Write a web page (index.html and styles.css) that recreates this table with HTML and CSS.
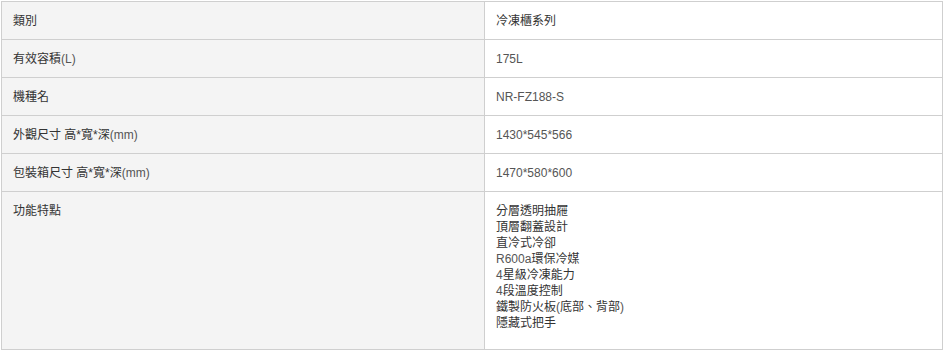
FILE: index.html
```html
<!DOCTYPE html>
<html lang="zh-Hant">
<head>
<meta charset="utf-8">
<title>規格</title>
<link rel="stylesheet" href="styles.css">
</head>
<body>
<table class="spec">
  <tbody>
    <tr><th class="label">類別</th><td class="value">冷凍櫃系列</td></tr>
    <tr><th class="label">有效容積<span class="lat">(L)</span></th><td class="value lat">175L</td></tr>
    <tr><th class="label">機種名</th><td class="value lat">NR-FZ188-S</td></tr>
    <tr><th class="label">外觀尺寸 高*寬*深<span class="lat">(mm)</span></th><td class="value lat">1430*545*566</td></tr>
    <tr><th class="label">包裝箱尺寸 高*寬*深<span class="lat">(mm)</span></th><td class="value lat">1470*580*600</td></tr>
    <tr class="tall">
      <th class="label">功能特點</th>
      <td class="value">
        <div class="line">分層透明抽屜</div>
        <div class="line">頂層翻蓋設計</div>
        <div class="line">直冷式冷卻</div>
        <div class="line"><span class="lat">R600a</span>環保冷媒</div>
        <div class="line"><span class="lat">4</span>星級冷凍能力</div>
        <div class="line"><span class="lat">4</span>段溫度控制</div>
        <div class="line">鐵製防火板<span class="lat">(</span>底部、背部<span class="lat">)</span></div>
        <div class="line">隱藏式把手</div>
      </td>
    </tr>
  </tbody>
</table>
</body>
</html>
```
FILE: styles.css
```css
html, body {
  margin: 0;
  padding: 0;
  background: #ffffff;
}
body {
  padding: 1px 0 0 1px;
  font-family: "Liberation Sans", "Noto Sans CJK TC", sans-serif;
  font-size: 12px;
  color: #333333;
}
.spec {
  border-collapse: collapse;
  width: 942px;
  table-layout: fixed;
}
.spec th, .spec td {
  border: 1px solid #cfcfcf;
  padding: 11px 11px 10px 11px;
  line-height: 16px;
  text-align: left;
  vertical-align: top;
  font-weight: normal;
}
.label {
  width: 460px;
  background: #f4f4f4;
}
.value {
  background: #ffffff;
}
.lat {
  color: #555555;
}
.tall th, .tall td {
  padding-bottom: 18px;
}
.line {
  line-height: 16px;
}
```
